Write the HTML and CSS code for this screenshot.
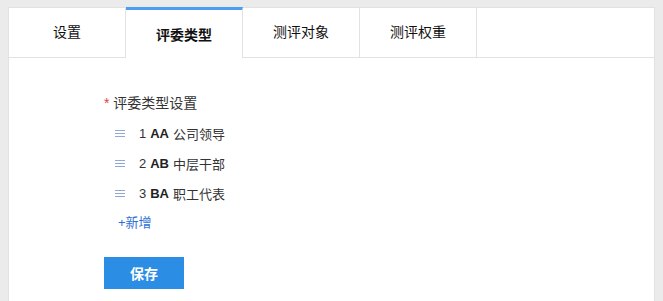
FILE: index.html
```html
<!DOCTYPE html>
<html lang="zh-CN">
<head>
  <meta charset="UTF-8">
  <meta name="viewport" content="width=device-width, initial-scale=1.0">
  <title>评委类型</title>
  <link rel="stylesheet" href="styles.css">
</head>
<body>

  <div class="panel">
    <!-- Tabs -->
    <div class="tabs">
      <div class="tab">设置</div>
      <div class="tab active">评委类型</div>
      <div class="tab">测评对象</div>
      <div class="tab">测评权重</div>
      <div class="tab-fill"></div>
    </div>

    <!-- Judge types -->
    <div class="content">
      <div class="field-label"><span class="required">*</span> 评委类型设置</div>
      <ul class="type-list">
        <li class="type-item">
          <svg class="drag" width="10" height="8" viewBox="0 0 10 8"><path d="M0 0.5h10M0 3.5h10M0 6.5h10" stroke="#8fa8d8" stroke-width="1"/></svg>
          <span class="num">1</span> <b>AA</b> 公司领导
        </li>
        <li class="type-item">
          <svg class="drag" width="10" height="8" viewBox="0 0 10 8"><path d="M0 0.5h10M0 3.5h10M0 6.5h10" stroke="#8fa8d8" stroke-width="1"/></svg>
          <span class="num">2</span> <b>AB</b> 中层干部
        </li>
        <li class="type-item">
          <svg class="drag" width="10" height="8" viewBox="0 0 10 8"><path d="M0 0.5h10M0 3.5h10M0 6.5h10" stroke="#8fa8d8" stroke-width="1"/></svg>
          <span class="num">3</span> <b>BA</b> 职工代表
        </li>
      </ul>
      <a class="add-link" href="#">+新增</a>
      <div class="actions">
        <button type="button">保存</button>
      </div>
    </div>
  </div>

</body>
</html>
```

FILE: styles.css
```css
body {
  font-family: 'Liberation Sans', 'Noto Sans CJK SC', sans-serif;
  background: #ebebeb;
  margin: 7px 8px 0;
  color: #333;
}

.panel {
  background: #fff;
  border-left: 1px solid #e2e2e2;
  border-right: 1px solid #e2e2e2;
  min-height: 294px;
}

.tabs {
  display: flex;
}

.tab {
  width: 116px;
  height: 49px;
  line-height: 49px;
  text-align: center;
  font-size: 14px;
  color: #111;
  border-top: 1px solid #e2e2e2;
  border-bottom: 1px solid #e2e2e2;
  border-right: 1px solid #e2e2e2;
}

.tab.active {
  height: 48px;
  line-height: 50px;
  border-top: 3px solid #4a9ff2;
  border-bottom: 0;
  font-weight: bold;
}

.tab-fill {
  flex: 1;
  border-top: 1px solid #e2e2e2;
  border-bottom: 1px solid #e2e2e2;
}

.content {
  padding: 30px 0 0 95px;
}

.field-label {
  height: 30px;
  line-height: 30px;
  font-size: 14px;
}

.required {
  color: #e0443a;
}

.type-list {
  list-style: none;
  margin: 0;
  padding: 0;
}

.type-item {
  display: flex;
  align-items: center;
  gap: 4px;
  height: 30px;
  padding-left: 11px;
  font-size: 13px;
}

.type-item .drag {
  margin: 1px 10px 0 0;
}

.type-item b {
  color: #222;
}

.add-link {
  display: block;
  height: 30px;
  line-height: 30px;
  padding-left: 14px;
  font-size: 13px;
  color: #2f6fd8;
  text-decoration: none;
}

.actions {
  margin-top: 19px;
}

button {
  width: 80px;
  height: 32px;
  border: none;
  background-color: #2b8de3;
  color: white;
  font-family: inherit;
  font-size: 14px;
  font-weight: bold;
  cursor: pointer;
}
```
